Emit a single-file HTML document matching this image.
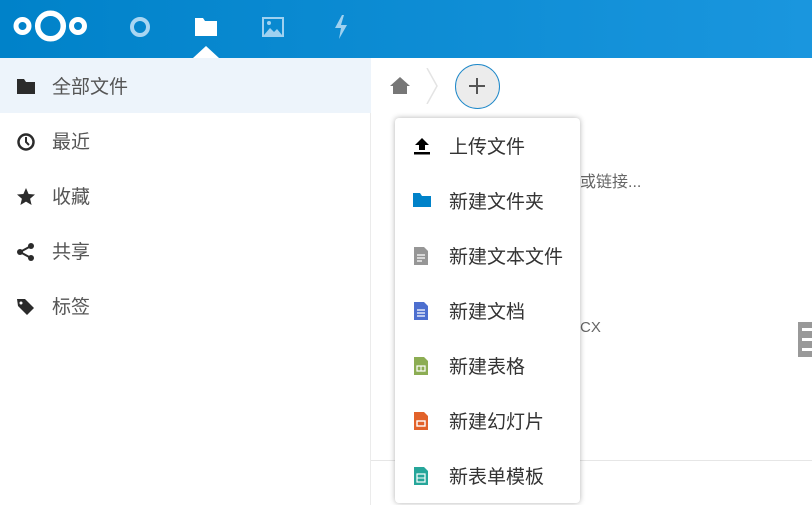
<!DOCTYPE html>
<html><head><meta charset="utf-8"><style>
*{margin:0;padding:0;box-sizing:border-box}
body{width:812px;height:505px;overflow:hidden;background:#fff;font-family:"Liberation Sans","Noto Sans CJK SC",sans-serif;position:relative;color:#333}
#hdr{position:absolute;left:0;top:0;width:812px;height:58px;background:linear-gradient(90deg,#0082c9,#1a96de)}
.abs{position:absolute}
#side{position:absolute;left:0;top:58px;width:371px;height:447px;border-right:1px solid #ebebeb}
.it{position:absolute;left:0;width:371px;height:55px;font-size:19px;color:#555}
.it span{position:absolute;left:52px;top:18px;line-height:24px}
.it svg{position:absolute;left:16px;top:19px}
#menu{position:absolute;left:395px;top:118px;width:185px;height:385px;background:#fff;border-radius:4px;box-shadow:0 0 6px rgba(0,0,0,.3)}
.mi{position:absolute;left:0;width:185px;height:55px;font-size:19px;color:#333}
.mi span{position:absolute;left:54px;top:18px;line-height:24px}
.mi svg{position:absolute;left:18px;top:19px}
</style></head><body>
<div id="hdr">
<svg class="abs" style="left:0;top:0" width="100" height="58"><circle cx="50.5" cy="26" r="12.8" fill="none" stroke="#fff" stroke-width="5.5"/><circle cx="22.5" cy="26" r="6.5" fill="none" stroke="#fff" stroke-width="5"/><circle cx="78" cy="26" r="6.5" fill="none" stroke="#fff" stroke-width="5"/></svg>
<svg class="abs" style="left:128px;top:15px" width="24" height="24"><circle cx="12" cy="12" r="8" fill="none" stroke="#a9d6f2" stroke-width="4"/></svg>
<svg class="abs" style="left:195px;top:16px" width="22" height="20"><path d="M0 2h8l2 3h12v15H0z" fill="#fff"/></svg>
<svg class="abs" style="left:262px;top:17px" width="22" height="20"><rect x="1" y="1" width="20" height="18" fill="none" stroke="#9fd1f0" stroke-width="2"/><path d="M2 18l6-7 4 4 3-3 5 6z" fill="#9fd1f0"/><circle cx="7" cy="6" r="2" fill="#9fd1f0"/></svg>
<svg class="abs" style="left:333px;top:15px" width="16" height="24"><path d="M9 0L2 13h6l-2 11 8-14H8l3-10z" fill="#9fd1f0"/></svg>
<svg class="abs" style="left:193px;top:46px" width="26" height="12"><path d="M0 12L13 0l13 12z" fill="#fff"/></svg>
</div>
<div id="side">
<div class="it" style="top:0;background:#edf4fb"><svg width="20" height="18"><path d="M1 2h7l2 3h9v12H1z" fill="#2b2b2b"/></svg><span>全部文件</span></div>
<div class="it" style="top:55px"><svg width="20" height="20"><circle cx="10" cy="10" r="7.5" fill="none" stroke="#2b2b2b" stroke-width="2.5"/><path d="M10 5v5l3 3" fill="none" stroke="#2b2b2b" stroke-width="2"/></svg><span>最近</span></div>
<div class="it" style="top:110px"><svg width="20" height="20"><path d="M10 1l2.6 6 6.4.5-4.9 4.2 1.5 6.3L10 14.6 4.4 18l1.5-6.3L1 7.5 7.4 7z" fill="#2b2b2b"/></svg><span>收藏</span></div>
<div class="it" style="top:165px"><svg width="20" height="20"><circle cx="4" cy="10" r="3" fill="#2b2b2b"/><circle cx="15" cy="4" r="3" fill="#2b2b2b"/><circle cx="15" cy="16" r="3" fill="#2b2b2b"/><path d="M4 10L15 4M4 10l11 6" stroke="#2b2b2b" stroke-width="2"/></svg><span>共享</span></div>
<div class="it" style="top:220px"><svg width="20" height="20"><path d="M1 2h8l9 9-7 7-9-9z" fill="#2b2b2b"/><circle cx="5" cy="6" r="1.5" fill="#fff"/></svg><span>标签</span></div>
</div>
<svg class="abs" style="left:390px;top:76px" width="20" height="18"><path d="M10 1L0 10h3v8h14v-8h3z" fill="#777"/></svg>
<svg class="abs" style="left:425px;top:68px" width="14" height="36"><path d="M2 0l10 18L2 36" fill="none" stroke="#e4e4e4" stroke-width="1.5"/></svg>
<div class="abs" style="left:455px;top:64px;width:45px;height:45px;border-radius:50%;background:#ececec;border:1px solid #1e88c9"></div>
<svg class="abs" style="left:467px;top:76px" width="20" height="20"><path d="M10 2v16M2 10h16" stroke="#555" stroke-width="2"/></svg>
<div class="abs" style="left:580px;top:172px;font-size:16px;color:#666;line-height:22px">或链接...</div>
<div class="abs" style="left:580px;top:318px;font-size:15px;color:#666;line-height:20px">CX</div>
<div class="abs" style="left:371px;top:460px;width:441px;height:1px;background:#e6e6e6"></div>
<div class="abs" style="left:798px;top:322px;width:14px;height:35px;background:#999"></div>
<div class="abs" style="left:802px;top:328px;width:10px;height:3px;background:#fff"></div>
<div class="abs" style="left:802px;top:338px;width:10px;height:3px;background:#fff"></div>
<div class="abs" style="left:802px;top:348px;width:10px;height:3px;background:#fff"></div>
<div id="menu">
<div class="mi" style="top:0"><svg width="18" height="18"><path d="M9 1l7 7h-4v5H6V8H2z" fill="#000"/><rect x="1" y="15" width="16" height="2.5" fill="#000"/></svg><span>上传文件</span></div>
<div class="mi" style="top:55px"><svg width="18" height="16"><path d="M0 1h7l2 3h9v11H0z" fill="#0082c9"/></svg><span>新建文件夹</span></div>
<div class="mi" style="top:110px"><svg width="16" height="18"><path d="M1 0h10l4 4v14H1z" fill="#969696"/><path d="M4 8h8M4 11h8M4 14h5" stroke="#fff" stroke-width="1.2"/></svg><span>新建文本文件</span></div>
<div class="mi" style="top:165px"><svg width="16" height="18"><path d="M1 0h10l4 4v14H1z" fill="#4d6fcf"/><path d="M4 8h8M4 11h8M4 14h8" stroke="#fff" stroke-width="1.2"/></svg><span>新建文档</span></div>
<div class="mi" style="top:220px"><svg width="16" height="18"><path d="M1 0h10l4 4v14H1z" fill="#8cad53"/><rect x="4" y="9" width="8" height="5" fill="none" stroke="#fff" stroke-width="1.2"/><path d="M8 9v5" stroke="#fff"/></svg><span>新建表格</span></div>
<div class="mi" style="top:275px"><svg width="16" height="18"><path d="M1 0h10l4 4v14H1z" fill="#e2622a"/><rect x="4" y="9" width="8" height="5" fill="none" stroke="#fff" stroke-width="1.4"/></svg><span>新建幻灯片</span></div>
<div class="mi" style="top:330px"><svg width="16" height="18"><path d="M1 0h10l4 4v14H1z" fill="#26a69a"/><rect x="4" y="7" width="8" height="8" fill="none" stroke="#fff" stroke-width="1.2"/><path d="M4 11h8" stroke="#fff"/></svg><span>新表单模板</span></div>
</div>
</body></html>
